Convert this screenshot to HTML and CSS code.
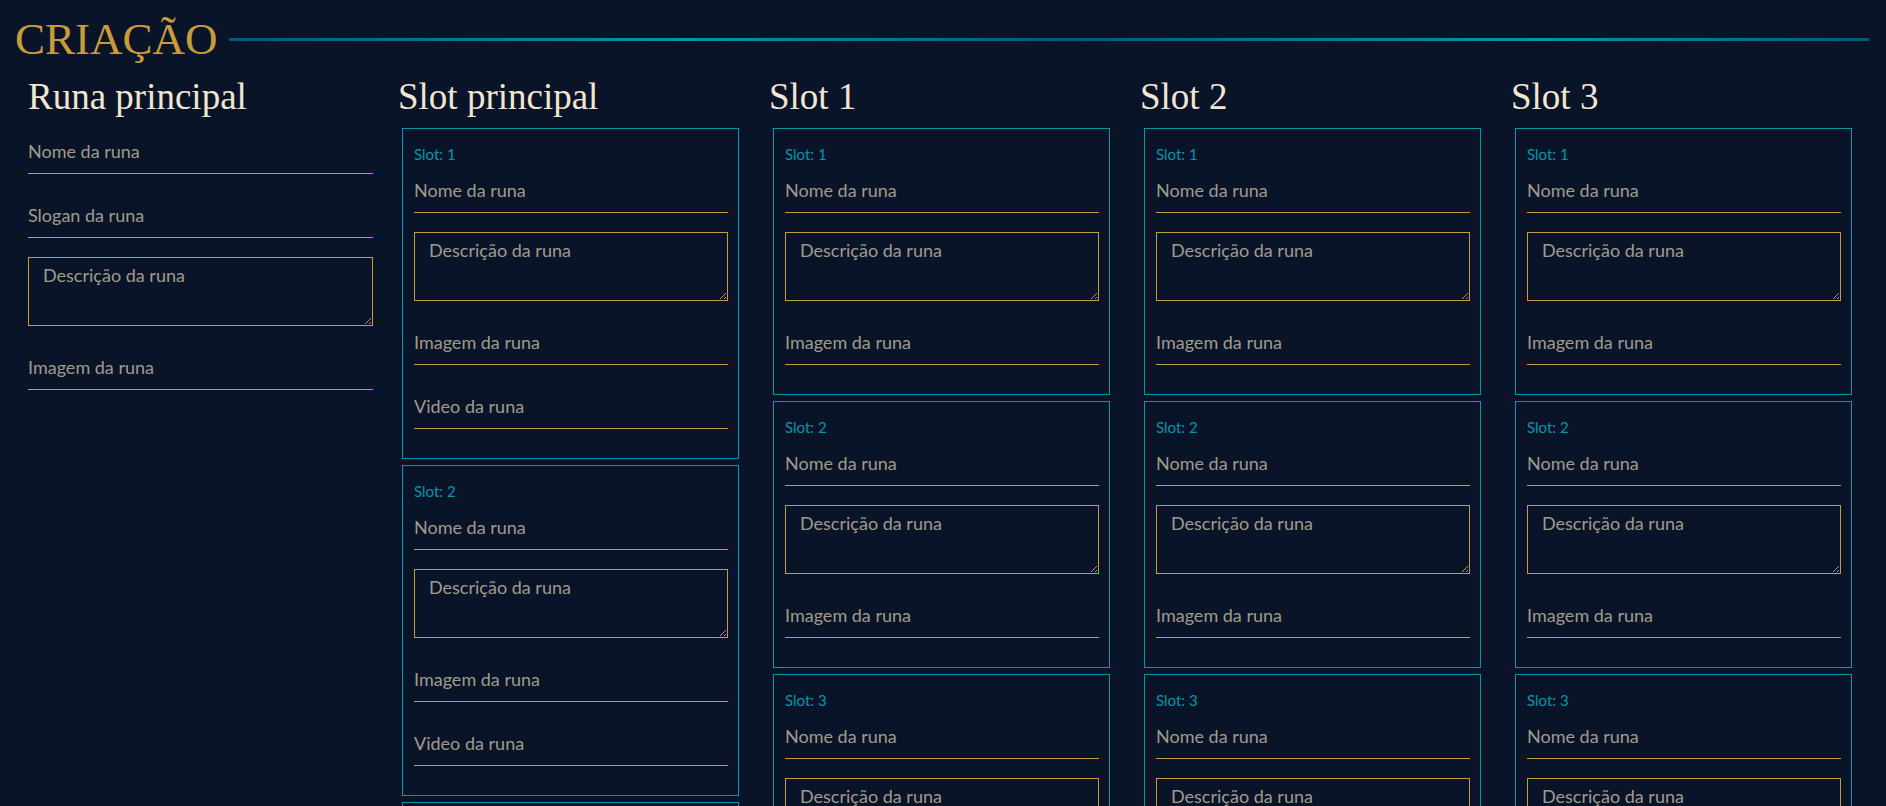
FILE: index.html
```html
<!DOCTYPE html>
<html lang="pt-BR">
<head>
<meta charset="utf-8">
<title>Criação</title>
<link rel="stylesheet" href="styles.css">
</head>
<body>
<header class="page-header">
  <h1 class="page-title">CRIAÇÃO</h1>
  <div class="title-rule"></div>
</header>
<main class="columns">
  <section class="col col-main">
    <h2 class="col-title">Runa principal</h2>
    <div class="stack">
      <input class="field" type="text" placeholder="Nome da runa">
      <input class="field" type="text" placeholder="Slogan da runa">
      <textarea class="area" placeholder="Descrição da runa"></textarea>
      <input class="field" type="text" placeholder="Imagem da runa">
    </div>
  </section>

  <section class="col">
    <h2 class="col-title">Slot principal</h2>
    <div class="slot">
      <div class="slot-label">Slot: 1</div>
      <div class="stack">
        <input class="field" type="text" placeholder="Nome da runa">
        <textarea class="area" placeholder="Descrição da runa"></textarea>
        <input class="field" type="text" placeholder="Imagem da runa">
        <input class="field" type="text" placeholder="Video da runa">
      </div>
    </div>
    <div class="slot">
      <div class="slot-label">Slot: 2</div>
      <div class="stack">
        <input class="field" type="text" placeholder="Nome da runa">
        <textarea class="area" placeholder="Descrição da runa"></textarea>
        <input class="field" type="text" placeholder="Imagem da runa">
        <input class="field" type="text" placeholder="Video da runa">
      </div>
    </div>
    <div class="slot">
      <div class="slot-label">Slot: 3</div>
      <div class="stack">
        <input class="field" type="text" placeholder="Nome da runa">
        <textarea class="area" placeholder="Descrição da runa"></textarea>
        <input class="field" type="text" placeholder="Imagem da runa">
        <input class="field" type="text" placeholder="Video da runa">
      </div>
    </div>
  </section>

  <section class="col">
    <h2 class="col-title">Slot 1</h2>
    <div class="slot">
      <div class="slot-label">Slot: 1</div>
      <div class="stack">
        <input class="field" type="text" placeholder="Nome da runa">
        <textarea class="area" placeholder="Descrição da runa"></textarea>
        <input class="field" type="text" placeholder="Imagem da runa">
      </div>
    </div>
    <div class="slot">
      <div class="slot-label">Slot: 2</div>
      <div class="stack">
        <input class="field" type="text" placeholder="Nome da runa">
        <textarea class="area" placeholder="Descrição da runa"></textarea>
        <input class="field" type="text" placeholder="Imagem da runa">
      </div>
    </div>
    <div class="slot">
      <div class="slot-label">Slot: 3</div>
      <div class="stack">
        <input class="field" type="text" placeholder="Nome da runa">
        <textarea class="area" placeholder="Descrição da runa"></textarea>
        <input class="field" type="text" placeholder="Imagem da runa">
      </div>
    </div>
  </section>

  <section class="col">
    <h2 class="col-title">Slot 2</h2>
    <div class="slot">
      <div class="slot-label">Slot: 1</div>
      <div class="stack">
        <input class="field" type="text" placeholder="Nome da runa">
        <textarea class="area" placeholder="Descrição da runa"></textarea>
        <input class="field" type="text" placeholder="Imagem da runa">
      </div>
    </div>
    <div class="slot">
      <div class="slot-label">Slot: 2</div>
      <div class="stack">
        <input class="field" type="text" placeholder="Nome da runa">
        <textarea class="area" placeholder="Descrição da runa"></textarea>
        <input class="field" type="text" placeholder="Imagem da runa">
      </div>
    </div>
    <div class="slot">
      <div class="slot-label">Slot: 3</div>
      <div class="stack">
        <input class="field" type="text" placeholder="Nome da runa">
        <textarea class="area" placeholder="Descrição da runa"></textarea>
        <input class="field" type="text" placeholder="Imagem da runa">
      </div>
    </div>
  </section>

  <section class="col">
    <h2 class="col-title">Slot 3</h2>
    <div class="slot">
      <div class="slot-label">Slot: 1</div>
      <div class="stack">
        <input class="field" type="text" placeholder="Nome da runa">
        <textarea class="area" placeholder="Descrição da runa"></textarea>
        <input class="field" type="text" placeholder="Imagem da runa">
      </div>
    </div>
    <div class="slot">
      <div class="slot-label">Slot: 2</div>
      <div class="stack">
        <input class="field" type="text" placeholder="Nome da runa">
        <textarea class="area" placeholder="Descrição da runa"></textarea>
        <input class="field" type="text" placeholder="Imagem da runa">
      </div>
    </div>
    <div class="slot">
      <div class="slot-label">Slot: 3</div>
      <div class="stack">
        <input class="field" type="text" placeholder="Nome da runa">
        <textarea class="area" placeholder="Descrição da runa"></textarea>
        <input class="field" type="text" placeholder="Imagem da runa">
      </div>
    </div>
  </section>
</main>
</body>
</html>
```

FILE: styles.css
```css
* { box-sizing: border-box; }

html, body {
  margin: 0;
  background: #0A1428;
}

body {
  font-family: Lato, "Noto Sans", sans-serif;
  color: #A09B8C;
  overflow: hidden;
}

.page-header {
  display: flex;
  align-items: center;
  gap: 11px;
  padding: 13px 17px 0 15px;
}

.page-title {
  margin: 0;
  font-family: "Liberation Serif", serif;
  font-weight: normal;
  font-size: 45px;
  line-height: 52px;
  color: #C89B3C;
}

.title-rule {
  flex: 1;
  height: 3px;
  background: linear-gradient(90deg, #005A82 0%, #0397AB 28%, #005A82 51%, #0397AB 80%, #005A82 100%);
}

.columns {
  display: flex;
  align-items: flex-start;
  gap: 26px;
  padding: 10px 0 0 28px;
}

.col {
  width: 345px;
  flex: none;
}

.col-main {
  margin-right: -1px;
}

.col-title {
  margin: 0 0 9px;
  font-family: "Liberation Serif", serif;
  font-weight: normal;
  font-size: 37px;
  line-height: 44px;
  color: #F0E6D2;
}

.stack {
  display: flex;
  flex-direction: column;
  gap: 19px;
}

.col-main .stack {
  padding-top: 1px;
}

.slot {
  width: 337px;
  margin: 0 0 6px 4px;
  border: 1px solid #0397AB;
  padding: 15px 10px 29px 11px;
}

.slot-label {
  font-size: 15px;
  line-height: 20px;
  color: #0397AB;
  margin-bottom: 4px;
}

.field {
  display: block;
  width: 100%;
  height: 45px;
  padding: 0;
  margin: 0;
  border: none;
  border-bottom: 1px solid #C89B3C;
  background: transparent;
  font-family: Lato, "Noto Sans", sans-serif;
  font-size: 18px;
  color: #A09B8C;
  outline: none;
}

.area {
  display: block;
  width: 100%;
  height: 69px;
  margin: 0;
  padding: 6px 14px;
  border: 1px solid #C89B3C;
  background: transparent;
  font-family: Lato, "Noto Sans", sans-serif;
  font-size: 18px;
  color: #A09B8C;
  outline: none;
}

.field::placeholder,
.area::placeholder {
  color: #A09B8C;
  opacity: 1;
}
```
